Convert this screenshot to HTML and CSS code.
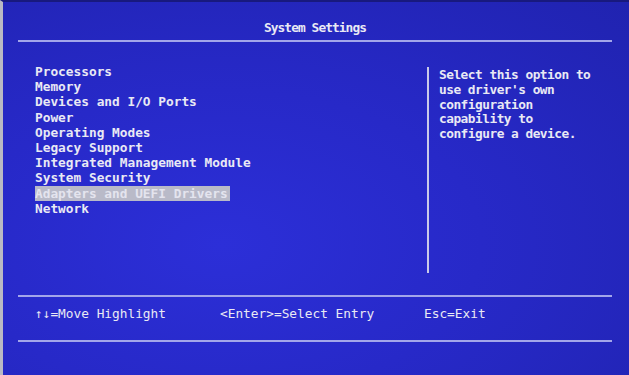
FILE: index.html
```html
<!DOCTYPE html>
<html lang="en">
<head>
  <meta charset="UTF-8" />
  <title>System Settings</title>
  <link rel="stylesheet" href="styles.css">
</head>
<body>

  <div class="screen">
    <!-- Title -->
    <div class="header">System Settings</div>

    <!-- Menu + help -->
    <div class="main">
      <ul class="menu">
        <li>Processors</li>
        <li>Memory</li>
        <li>Devices and I/O Ports</li>
        <li>Power</li>
        <li>Operating Modes</li>
        <li>Legacy Support</li>
        <li>Integrated Management Module</li>
        <li>System Security</li>
        <li><span class="selected">Adapters and UEFI Drivers</span></li>
        <li>Network</li>
      </ul>
      <div class="help">
        <p>Select this option to<br>use driver's own<br>configuration<br>capability to<br>configure a device.</p>
      </div>
    </div>

    <!-- Key hints -->
    <div class="footer">
      <span class="key key-move">&uarr;&darr;=Move Highlight</span>
      <span class="key key-enter">&lt;Enter&gt;=Select Entry</span>
      <span class="key">Esc=Exit</span>
    </div>
  </div>

</body>
</html>
```

FILE: styles.css
```css
/* Basic reset */
* {
  margin: 0;
  padding: 0;
  box-sizing: border-box;
}

body {
  width: 629px;
  height: 375px;
  overflow: hidden;
  background: #1f22a8;
  font-family: "DejaVu Sans Mono", "Liberation Mono", monospace;
  font-size: 12.8px;
  font-weight: bold;
  color: #e9e9f4;
}

.screen {
  width: 629px;
  height: 375px;
  padding: 0 17px 0 15px;
  border-left: 3px solid #b9b9c4;
  border-top: 2px solid #18197e;
  background: radial-gradient(ellipse at 35% 65%, #2c2fd8 0%, #2729c8 45%, #2023b0 100%);
}

/* Title */
.header {
  height: 40px;
  padding-top: 18px;
  line-height: 16px;
  text-align: center;
  letter-spacing: -0.9px;
  border-bottom: 2px solid #a3a6ea;
}

/* Menu area */
.main {
  display: flex;
  height: 253px;
  padding-top: 22px;
}

.menu {
  list-style: none;
  width: 409px;
  padding-left: 17px;
  line-height: 15.2px;
}

.selected {
  background: #b9bac8;
  color: #e4e4ee;
  padding-right: 2px;
}

.help {
  margin-top: 3px;
  height: 206px;
  border-left: 2px solid #c9cae8;
  padding: 1px 0 0 10px;
  line-height: 14.8px;
  letter-spacing: -0.5px;
}

/* Key hints */
.footer {
  display: flex;
  height: 47px;
  padding: 9px 0 0 17px;
  line-height: 15px;
  font-weight: normal;
  border-top: 2px solid #a3a6ea;
  border-bottom: 2px solid #a3a6ea;
}

.key-move {
  width: 185px;
}

.key-enter {
  width: 204px;
}
```
